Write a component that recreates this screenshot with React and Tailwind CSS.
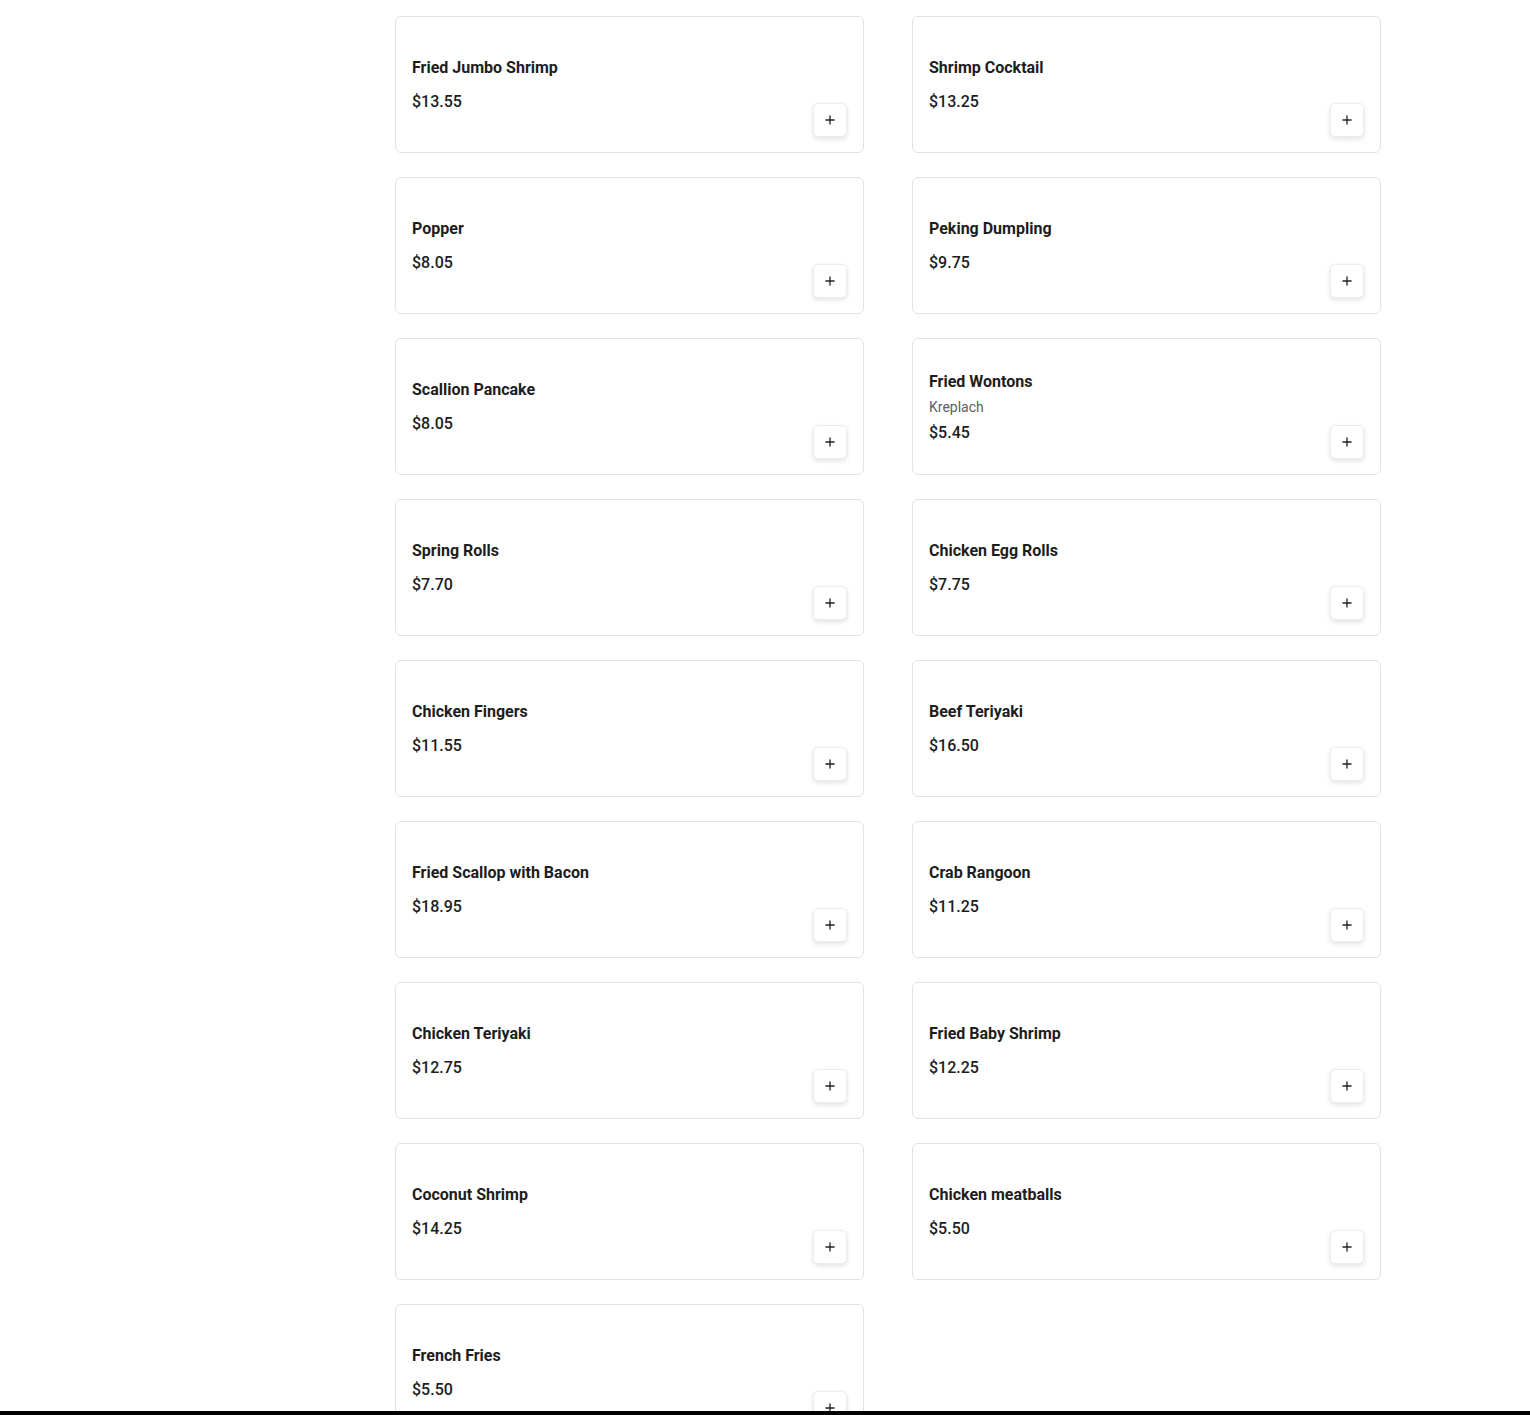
import React from "react";
import { Plus } from "lucide-react";

const items = [
  { name: "Fried Jumbo Shrimp", price: "$13.55" },
  { name: "Shrimp Cocktail", price: "$13.25" },
  { name: "Popper", price: "$8.05" },
  { name: "Peking Dumpling", price: "$9.75" },
  { name: "Scallion Pancake", price: "$8.05" },
  { name: "Fried Wontons", desc: "Kreplach", price: "$5.45" },
  { name: "Spring Rolls", price: "$7.70" },
  { name: "Chicken Egg Rolls", price: "$7.75" },
  { name: "Chicken Fingers", price: "$11.55" },
  { name: "Beef Teriyaki", price: "$16.50" },
  { name: "Fried Scallop with Bacon", price: "$18.95" },
  { name: "Crab Rangoon", price: "$11.25" },
  { name: "Chicken Teriyaki", price: "$12.75" },
  { name: "Fried Baby Shrimp", price: "$12.25" },
  { name: "Coconut Shrimp", price: "$14.25" },
  { name: "Chicken meatballs", price: "$5.50" },
  { name: "French Fries", price: "$5.50" },
];

function ItemCard({ item }) {
  return (
    <div className="relative h-[137px] rounded-md border border-[#e2e2e2] bg-white px-4 flex flex-col justify-center">
      <div
        className={`${item.desc ? "mt-[2px]" : ""} text-base leading-6 font-bold text-[#1d1d1d]`}
      >
        {item.name}
      </div>
      {item.desc && (
        <div className="mt-[3px] text-sm leading-5 text-[#5f5f5f]">{item.desc}</div>
      )}
      <div
        className={`${item.desc ? "mt-[4px]" : "mt-[10px]"} text-base leading-6 font-medium text-[#1d1d1d]`}
      >
        {item.price}
      </div>
      <button className="absolute right-4 bottom-[15px] w-[34px] h-[34px] rounded-[5px] border border-[#ececec] bg-white shadow-[0_2px_5px_rgba(0,0,0,0.12)] flex items-center justify-center">
        <Plus className="w-[14px] h-[14px] text-[#222]" strokeWidth={2.25} />
      </button>
    </div>
  );
}

export default function App() {
  return (
    <div
      className="min-h-screen bg-white"
      style={{ fontFamily: "Roboto, 'Liberation Sans', sans-serif" }}
    >
      <div className="ml-[395px] w-[986px] pt-4 pb-10 grid grid-cols-2 gap-x-12 gap-y-6">
        {items.map((it) => (
          <ItemCard key={it.name} item={it} />
        ))}
      </div>
      <div className="fixed left-0 right-0 bottom-0 h-1 bg-black" />
    </div>
  );
}
